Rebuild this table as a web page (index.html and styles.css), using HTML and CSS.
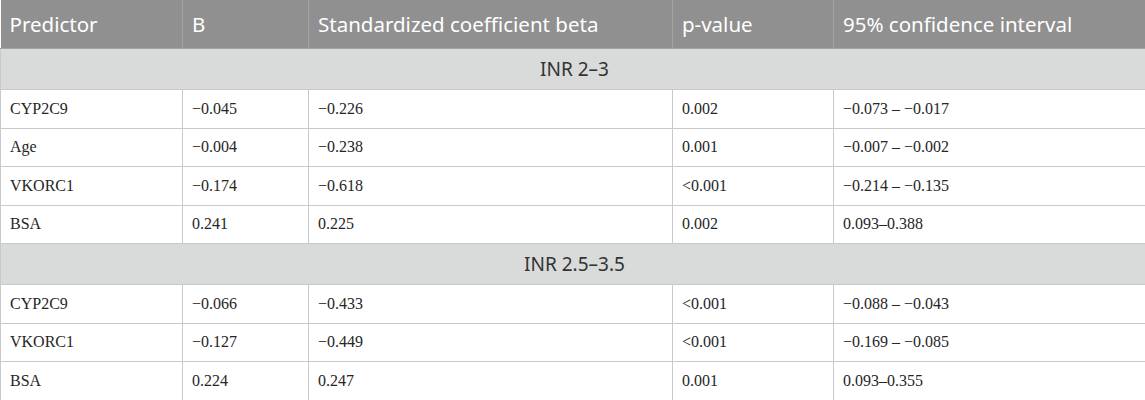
FILE: index.html
```html
<!DOCTYPE html>
<html>
<head>
<meta charset="utf-8">
<link rel="stylesheet" href="styles.css">
</head>
<body>
<table class="tbl">
  <colgroup>
    <col class="c1"><col class="c2"><col class="c3"><col class="c4"><col class="c5">
  </colgroup>
  <thead>
    <tr>
      <th>Predictor</th>
      <th>B</th>
      <th>Standardized coefficient beta</th>
      <th>p-value</th>
      <th>95% confidence interval</th>
    </tr>
  </thead>
  <tbody>
    <tr class="sec"><td colspan="5">INR 2–3</td></tr>
    <tr><td>CYP2C9</td><td>−0.045</td><td>−0.226</td><td>0.002</td><td>−0.073 – −0.017</td></tr>
    <tr><td>Age</td><td>−0.004</td><td>−0.238</td><td>0.001</td><td>−0.007 – −0.002</td></tr>
    <tr><td>VKORC1</td><td>−0.174</td><td>−0.618</td><td>&lt;0.001</td><td>−0.214 – −0.135</td></tr>
    <tr><td>BSA</td><td>0.241</td><td>0.225</td><td>0.002</td><td>0.093–0.388</td></tr>
    <tr class="sec"><td colspan="5">INR 2.5–3.5</td></tr>
    <tr><td>CYP2C9</td><td>−0.066</td><td>−0.433</td><td>&lt;0.001</td><td>−0.088 – −0.043</td></tr>
    <tr><td>VKORC1</td><td>−0.127</td><td>−0.449</td><td>&lt;0.001</td><td>−0.169 – −0.085</td></tr>
    <tr><td>BSA</td><td>0.224</td><td>0.247</td><td>0.001</td><td>0.093–0.355</td></tr>
  </tbody>
</table>
</body>
</html>
```

FILE: styles.css
```css
html, body {
  margin: 0;
  padding: 0;
  background: #ffffff;
}

.tbl {
  width: 1145px;
  border-collapse: collapse;
  table-layout: fixed;
}

.c1 { width: 182px; }
.c2 { width: 126px; }
.c3 { width: 364px; }
.c4 { width: 161px; }
.c5 { width: 312px; }

.tbl th {
  background: #909090;
  color: #ffffff;
  font-family: "Noto Sans", "Open Sans", sans-serif;
  font-weight: 400;
  font-size: 20.5px;
  text-align: left;
  height: 48px;
  padding: 0 9px;
  border: 1px solid #a3a3a3;
  border-top: none;
  vertical-align: middle;
}

.tbl th:first-child { border-left: none; }

.tbl td {
  font-family: "Liberation Serif", "Times New Roman", serif;
  font-size: 16px;
  color: #262626;
  height: 37.5px;
  padding: 0 9px;
  border: 1px solid #c9c9c9;
  vertical-align: middle;
}

.tbl tr.sec td {
  background: #d9dbda;
  font-family: "Noto Sans", "Open Sans", sans-serif;
  font-size: 19px;
  color: #333333;
  text-align: center;
  height: 40px;
  padding-left: 12px;
}
```
